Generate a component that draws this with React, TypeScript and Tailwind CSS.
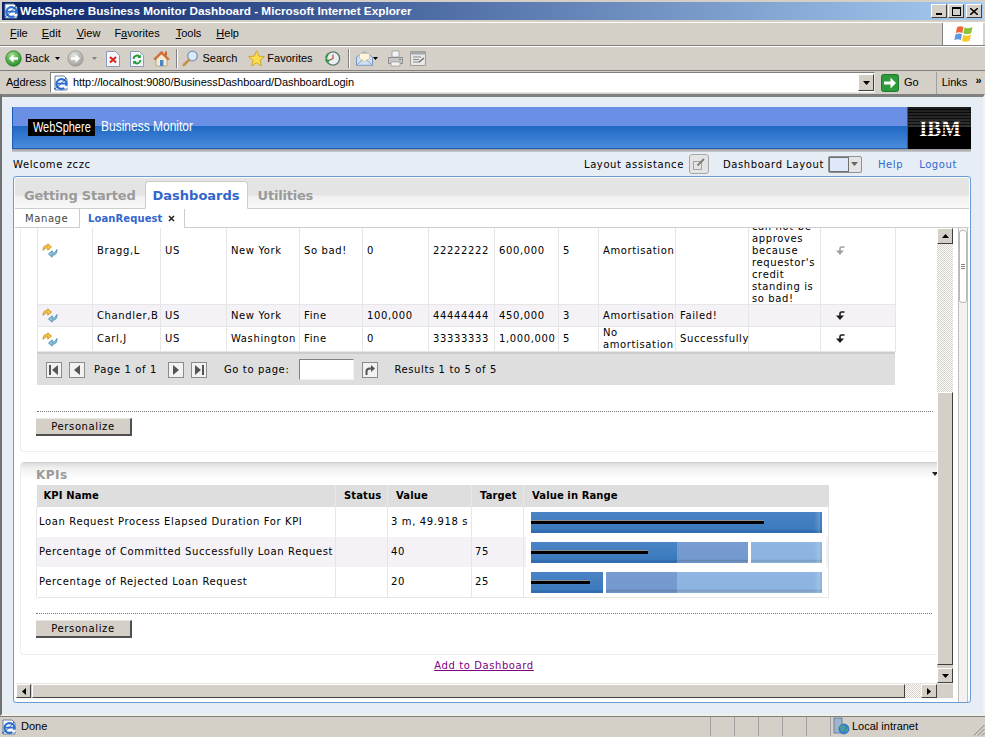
import React from "react";

const IeE = ({ s = 16 }: { s?: number }) => (
  <svg width={s} height={s} viewBox="0 0 16 16">
    <path d="M2 1h9l3 3v11H2z" fill="#fff" stroke="#6b7f9e" />
    <ellipse cx="8.5" cy="9" rx="5" ry="4.8" fill="none" stroke="#2a6fd0" strokeWidth="2.2" />
    <path d="M4 8.6h9.5" stroke="#2a6fd0" strokeWidth="1.8" />
    <path d="M11 12.5l3.5-1" stroke="#fff" strokeWidth="2" />
    <path d="M1 14c2 0 9-7 12-11" fill="none" stroke="#1b4fa8" strokeWidth="1" />
  </svg>
);

const NavCircle = ({ on, flip }: { on: boolean; flip?: boolean }) => (
  <svg width="17" height="17" viewBox="0 0 17 17">
    <defs>
      <radialGradient id="gOn" cx="40%" cy="30%" r="75%">
        <stop offset="0" stopColor="#a4e08c" />
        <stop offset="1" stopColor="#1e8a24" />
      </radialGradient>
      <radialGradient id="gOff" cx="40%" cy="30%" r="75%">
        <stop offset="0" stopColor="#e4e4e0" />
        <stop offset="1" stopColor="#9a9a96" />
      </radialGradient>
    </defs>
    <circle cx="8.5" cy="8.5" r="7.7" fill={on ? "url(#gOn)" : "url(#gOff)"} stroke={on ? "#2f7a2c" : "#979793"} strokeWidth="0.8" />
    <path d={flip ? "M4 7.3h4.5V4.2l4.5 4.3-4.5 4.3V9.7H4z" : "M13 7.3H8.5V4.2L4 8.5l4.5 4.3V9.7H13z"} fill="#fff" />
  </svg>
);

const SmallDown = ({ c = "#000" }: { c?: string }) => (
  <svg width="5" height="3" viewBox="0 0 5 3"><path d="M0 0h5L2.5 3z" fill={c} /></svg>
);

const Stop = () => (
  <svg width="14" height="16" viewBox="0 0 14 16">
    <path d="M.5.5h9l4 4v11H.5z" fill="#f4f6fb" stroke="#8a9ab8" />
    <path d="M4 6l6 5.5M10 6l-6 5.5" stroke="#d8261c" strokeWidth="2" />
  </svg>
);
const Refresh = () => (
  <svg width="14" height="16" viewBox="0 0 14 16">
    <path d="M.5.5h9l4 4v11H.5z" fill="#f4f6fb" stroke="#8a9ab8" />
    <path d="M3.5 8a3.5 3.5 0 0 1 6-2.4" fill="none" stroke="#1e9a30" strokeWidth="1.8" />
    <path d="M10.8 3.5v3.4H7.4z" fill="#1e9a30" />
    <path d="M10.5 9a3.5 3.5 0 0 1-6 2.4" fill="none" stroke="#1e9a30" strokeWidth="1.8" />
    <path d="M3.2 13.5v-3.4h3.4z" fill="#1e9a30" />
  </svg>
);
const Home = () => (
  <svg width="17" height="17" viewBox="0 0 17 17">
    <path d="M3 8v8h11V8L8.5 3z" fill="#f3ead8" stroke="#a88e68" strokeWidth=".7" />
    <path d="M.7 9L8.5 1.2 16.3 9l-1.4 1L8.5 4 2.2 10z" fill="#e2702a" stroke="#b04c16" strokeWidth=".5" />
    <rect x="7" y="10" width="3.4" height="6" fill="#4d86c8" />
    <rect x="12" y="1.5" width="2" height="4" fill="#c8622a" />
  </svg>
);
const Search = () => (
  <svg width="17" height="17" viewBox="0 0 17 17">
    <circle cx="10.5" cy="6" r="4.8" fill="#d8ecfa" stroke="#7c94b4" strokeWidth="1.3" />
    <path d="M7 9.8L1.8 15" stroke="#c6904a" strokeWidth="2.6" strokeLinecap="round" />
  </svg>
);
const Star = () => (
  <svg width="17" height="17" viewBox="0 0 17 17">
    <path d="M8.5.8l2.3 5.3 5.6.5-4.3 3.7 1.3 5.6-4.9-3-4.9 3 1.3-5.6L.6 6.6l5.6-.5z" fill="#fbdc4a" stroke="#c89a1e" strokeWidth=".8" />
  </svg>
);
const History = () => (
  <svg width="17" height="17" viewBox="0 0 17 17">
    <circle cx="9" cy="8.5" r="6.6" fill="#e8eef2" stroke="#5e7c6c" strokeWidth="1.4" />
    <path d="M9 4.5v4l-3 1.5" fill="none" stroke="#c0392b" strokeWidth="1.1" />
    <path d="M.5 9.5h6l-3 4z" fill="#2a9a3a" />
    <path d="M2 8a7 7 0 0 1 2-4" fill="none" stroke="#2a9a3a" strokeWidth="2" />
  </svg>
);
const Mail = () => (
  <svg width="17" height="15" viewBox="0 0 17 15">
    <path d="M.5 6L8.5.7 16.5 6v8.3H.5z" fill="#cfe0f4" stroke="#7f97c0" />
    <path d="M3.5 2.5h10v5l-5 3-5-3z" fill="#fff5d8" stroke="#d0b878" strokeWidth=".6" />
    <path d="M.7 14l5.8-5M16.3 14l-5.8-5" stroke="#7f97c0" strokeWidth=".8" />
  </svg>
);
const Printer = () => (
  <svg width="17" height="17" viewBox="0 0 17 17">
    <path d="M5 1h7v6H5z" fill="#f4f4f4" stroke="#9a9a9a" strokeWidth=".8" />
    <path d="M1.5 7.5h14v6h-14z" fill="#c6c6c6" stroke="#8c8c8c" />
    <path d="M4 12h9v4H4z" fill="#f6f6f6" stroke="#9a9a9a" strokeWidth=".8" />
    <circle cx="13" cy="9.5" r=".8" fill="#666" />
  </svg>
);
const EditIcon = () => (
  <svg width="16" height="15" viewBox="0 0 16 15">
    <path d="M.5.5h15v14H.5z" fill="#e8e8e8" stroke="#9c9c9c" />
    <path d="M.5.5h15v3H.5z" fill="#a6a6a6" />
    <path d="M3 6h8M3 8.5h6M3 11h7" stroke="#8a8a8a" />
    <path d="M9 11l5-4" stroke="#6a6a6a" strokeWidth="1.4" />
  </svg>
);
const Flag = () => (
  <svg width="21" height="19" viewBox="0 0 21 19">
    <path d="M4 2.5C6 1 8 1 10.5 2L9.3 8C7 7 5 7 2.8 8.3z" fill="#f0663a" />
    <path d="M11.5 2.5c2.5 1 4.500 1 8 -.5L18.300 8c-3 1.500-5 1.500-8 .5z" fill="#8ac63a" />
    <path d="M2.500 9.500C5 8.300 7 8.300 9 9.200L7.800 15C5.500 14 3.500 14 1.300 15.300z" fill="#5a9ae0" />
    <path d="M10.200 10c2.500 1 4.800 1 7.800-.500L16.800 15.500c-3 1.500-5.300 1.500-7.800.500z" fill="#f8c828" />
  </svg>
);
const GoIcon = () => (
  <svg width="18" height="18" viewBox="0 0 18 18">
    <rect x=".5" y=".5" width="17" height="17" rx="2" fill="#2c9a3c" stroke="#1c7a2c" />
    <path d="M3 7.500h6.500V3.500L15 9l-5.500 5.500v-4H3z" fill="#fff" />
  </svg>
);
const NetIcon = () => (
  <svg width="17" height="19" viewBox="0 0 17 19">
    <rect x="1" y="1" width="8" height="15" fill="#9cb4cc" stroke="#51688c" strokeWidth=".7" />
    <circle cx="11" cy="12" r="5" fill="#3a82d8" stroke="#2460a8" strokeWidth=".6" />
    <path d="M8 10c2-2 4 0 3 2s-3 2-3-2zM13 14l2-2" stroke="#4cb84c" strokeWidth="1.400" fill="none" />
  </svg>
);
const Grip = () => (
  <svg width="12" height="12" viewBox="0 0 12 12">
    <path d="M11.500 1L1 11.500M11.500 5L5 11.500M11.500 9L9 11.500" stroke="#808080" />
  </svg>
);

const RowIcon = () => (
  <svg width="16" height="15" viewBox="0 0 16 15" className="block">
    <path d="M1 7.500C1 3 3.500 2 5.800 2.400V.8L9.500 4 5.800 7.200V5C4 4.800 2.500 5.500 1 7.500z" fill="#f6c448" stroke="#c88a1c" strokeWidth=".8" />
    <path d="M15 6.500c0 5-2.500 6-4.800 5.500v2.200L6.500 11l3.700-3.200V10c1.800.2 3.300-1 4.800-3.500z" fill="#8cc4dc" stroke="#3c84a8" strokeWidth=".8" />
  </svg>
);
const Undo = ({ c = "#1a1a1a" }: { c?: string }) => (
  <svg width="11" height="10" viewBox="0 0 11 10" className="block">
    <path d="M9.500 1H6.500Q5 1 5 2.500V5" fill="none" stroke={c} strokeWidth="1.600" />
    <path d="M1 4.500h8L5 9z" fill={c} />
  </svg>
);

const btn = "border border-t-white border-l-white border-r-[#404040] border-b-[#404040] bg-[#d4d0c8]";

const Tri = ({ d }: { d: "u" | "d" | "l" | "r" }) => {
  const p = { u: "M0 4L3.500 0 7 4z", d: "M0 0h7L3.500 4z", l: "M4 0v7L0 3.500z", r: "M0 0v7L4 3.500z" }[d];
  const vertical = d === "u" || d === "d";
  return (
    <svg width={vertical ? 7 : 4} height={vertical ? 4 : 7} viewBox={vertical ? "0 0 7 4" : "0 0 4 7"}>
      <path d={p} fill="#000" />
    </svg>
  );
};

const Personalize = () => (
  <button className="block w-[96px] h-[18px] bg-[#d4d0c8] border-t border-t-[#e8e6e0] border-r-2 border-r-[#505050] border-b-2 border-b-[#505050] text-[10px] tracking-[0.6px] text-black leading-none">
    Personalize
  </button>
);

const PagerBtn = ({ kind }: { kind: "first" | "prev" | "next" | "last" | "go" }) => (
  <div className="w-[16px] h-[16px] border border-[#8c8c8c] bg-[#f2f2f2] flex items-center justify-center">
    <svg width="12" height="12" viewBox="0 0 12 12">
      {kind === "first" && <path d="M1 1h2v10H1zM10 1v10L4 6z" fill="#555" />}
      {kind === "prev" && <path d="M9 1v10L3 6z" fill="#555" />}
      {kind === "next" && <path d="M3 1v10l6-5z" fill="#555" />}
      {kind === "last" && <path d="M9 1h2v10H9zM2 1v10l6-5z" fill="#555" />}
      {kind === "go" && (
        <>
          <path d="M2.500 11V7.500Q2.500 4.500 6 4.500H7" fill="none" stroke="#555" strokeWidth="2" />
          <path d="M7 1l4 3.500L7 8z" fill="#555" />
        </>
      )}
    </svg>
  </div>
);

const td = "border border-[#e6e6e6] px-[4px] align-middle";

const rows = [
  { cls: "h-[108px]", bg: "bg-white", c: ["Bragg,L", "US", "New York", "So bad!", "0", "22222222", "600,000", "5", "Amortisation", ""], gray: true },
  { cls: "h-[22px]", bg: "bg-[#f5f2f7]", c: ["Chandler,B", "US", "New York", "Fine", "100,000", "44444444", "450,000", "3", "Amortisation", "Failed!"], gray: false },
  { cls: "h-[25px]", bg: "bg-white", c: ["Carl,J", "US", "Washington", "Fine", "0", "33333333", "1,000,000", "5", "No amortisation", "Successfully"], gray: false },
];

const Bar = ({ seg, mark }: { seg: [number, string][]; mark: number }) => (
  <div className="relative flex w-[291px] h-[21px]">
    {seg.map(([w, k], i) => (
      <div
        key={i}
        style={{ width: w }}
        className={
          k === "d"
            ? "h-full bg-[linear-gradient(#4a84c6,#3a7abc_85%,#2f68aa_90%,#3470b2)]"
            : k === "m"
            ? "h-full bg-[linear-gradient(#7a9cd2,#7299cf_82%,#6684b0_88%,#7299cf)]"
            : k === "l"
            ? "h-full bg-[linear-gradient(#8fb6e2,#8cb4e0_82%,#7f9dbe_88%,#8cb4e0)]"
            : "h-full bg-white"
        }
      />
    ))}
    <div className="absolute right-[2px] top-0 bottom-0 w-[6px] bg-[linear-gradient(90deg,rgba(255,255,255,0),rgba(255,255,255,0.18))]" />
    <div style={{ width: mark }} className="absolute left-0 top-[8px] h-[4px] bg-black border-t border-t-[#909090]" />
  </div>
);

const kpis: { n: string; v: string; t: string; seg: [number, string][]; mark: number; bg: string }[] = [
  { n: "Loan Request Process Elapsed Duration For KPI", v: "3 m, 49.918 s", t: "", seg: [[291, "d"]], mark: 233, bg: "bg-white" },
  { n: "Percentage of Committed Successfully Loan Request", v: "40", t: "75", seg: [[146, "d"], [71, "m"], [3, "w"], [71, "l"]], mark: 117, bg: "bg-[#f5f2f7]" },
  { n: "Percentage of Rejected Loan Request", v: "20", t: "25", seg: [[72, "d"], [3, "w"], [71, "m"], [145, "l"]], mark: 59, bg: "bg-white" },
];

export default function App() {
  return (
    <div className="w-[985px] h-[737px] flex flex-col bg-[#d4d0c8] overflow-hidden font-['Liberation_Sans',sans-serif] text-black">
      {/* Title bar */}
      <div className="h-[22px] pt-[2px] px-[2px] pb-[2px] shrink-0">
        <div className="h-[18px] flex items-center bg-[linear-gradient(90deg,#0a246a,#a6caf0)] pl-[1px] pr-[1px]">
          <IeE />
          <span className="ml-[1px] text-white font-bold text-[11.75px] whitespace-nowrap">WebSphere Business Monitor Dashboard - Microsoft Internet Explorer</span>
          <div className={`ml-auto w-[16px] h-[14px] ${btn} flex items-end justify-center pb-[2px]`}><div className="w-[6px] h-[2px] bg-black" /></div>
          <div className={`ml-[1px] w-[16px] h-[14px] ${btn} flex items-center justify-center`}><div className="w-[9px] h-[9px] border border-black border-t-2" /></div>
          <div className={`ml-[2px] w-[16px] h-[14px] ${btn} flex items-center justify-center`}>
            <svg width="8" height="7" viewBox="0 0 8 7"><path d="M0 0l8 7M8 0L0 7" stroke="#000" strokeWidth="1.500" /></svg>
          </div>
        </div>
      </div>
      {/* Menu */}
      <div className="h-[24px] shrink-0 flex items-stretch border-t border-t-white border-b border-b-[#808080]">
        <div className="flex items-center text-[11px] flex-1 pb-[2px]">
          <span className="ml-[10px]"><u>F</u>ile</span>
          <span className="ml-[14px]"><u>E</u>dit</span>
          <span className="ml-[16px]"><u>V</u>iew</span>
          <span className="ml-[14px]">F<u>a</u>vorites</span>
          <span className="ml-[16px]"><u>T</u>ools</span>
          <span className="ml-[15px]"><u>H</u>elp</span>
        </div>
        <div className="w-[41px] mr-[2px] bg-white border-l border-l-[#808080] flex items-center justify-center"><Flag /></div>
      </div>
      {/* Toolbar */}
      <div className="h-[24px] shrink-0 flex items-center border-t border-t-white text-[11px]">
        <div className="ml-[5px]"><NavCircle on /></div>
        <span className="ml-[3px]">Back</span>
        <div className="ml-[6px]"><SmallDown /></div>
        <div className="ml-[7px]"><NavCircle on={false} flip /></div>
        <div className="ml-[8px]"><SmallDown c="#808080" /></div>
        <div className="ml-[9px]"><Stop /></div>
        <div className="ml-[10px]"><Refresh /></div>
        <div className="ml-[9px]"><Home /></div>
        <div className="ml-[6px] w-[2px] h-[19px] border-l border-l-[#808080] border-r border-r-white" />
        <div className="ml-[4px]"><Search /></div>
        <span className="ml-[3px]">Search</span>
        <div className="ml-[11px]"><Star /></div>
        <span className="ml-[2px]">Favorites</span>
        <div className="ml-[11px]"><History /></div>
        <div className="ml-[7px] w-[2px] h-[19px] border-l border-l-[#808080] border-r border-r-white" />
        <div className="ml-[6px]"><Mail /></div>
        <div><SmallDown /></div>
        <div className="ml-[9px]"><Printer /></div>
        <div className="ml-[6px]"><EditIcon /></div>
      </div>
      {/* Address */}
      <div className="h-[24px] shrink-0 flex items-center border-t border-t-[#808080] text-[11px]">
        <span className="ml-[6px] w-[44px]">A<u>d</u>dress</span>
        <div className="w-[825px] h-[21px] flex items-center bg-white border border-[#808080] border-b-[#e8e6e0] border-r-[#e8e6e0] pl-[2px]">
          <IeE />
          <span className="ml-[4px] text-[11px] tracking-[-0.05px]">http://localhost:9080/BusinessDashboard/DashboardLogin</span>
          <div className={`ml-auto w-[16px] h-[17px] ${btn} flex items-center justify-center`}><Tri d="d" /></div>
        </div>
        <div className="ml-[6px]"><GoIcon /></div>
        <span className="ml-[5px]">Go</span>
        <div className="ml-[17px] h-[22px] border-l border-l-[#a0a0a0]" />
        <span className="ml-[5px]">Links</span>
        <span className="ml-[8px] text-[11px] font-bold leading-none pb-[4px]">»</span>
      </div>
      {/* Page */}
      <div className="h-[622px] shrink-0 bg-[#e6edf5] border-t-[3px] border-t-[#808080] border-l-2 border-l-[#707070] border-r-2 border-r-[#f4f3f0] border-b-2 border-b-[#f0efe9] pl-[10px] pr-[12px] pt-[10px] font-['DejaVu_Sans',sans-serif]">
        {/* Banner */}
        <div className="h-[42px] flex bg-[linear-gradient(#6a90e6_0,#6a90e6_47%,#2068c4_47%,#4a8cdc_100%)] border-l border-l-[#1a5cb4] border-b border-b-[#1a5cb4] w-[959px]">
          <div className="flex items-center ml-[15px] font-['Liberation_Sans',sans-serif]">
            <span className="w-[67px] h-[17px] bg-black text-white flex items-center justify-center overflow-hidden">
              <span className="block scale-x-[0.785] text-[14px] leading-[17px] whitespace-nowrap">WebSphere</span>
            </span>
            <span className="block ml-[6px] w-[100px] text-white text-[15px] whitespace-nowrap scale-x-[0.8] origin-left mb-[2px]">Business Monitor</span>
          </div>
          <div className="ml-auto relative w-[64px] h-[42px] bg-[linear-gradient(#1c1c1c,#333_48%,#000_48%)] flex items-center justify-center border-l border-l-[#1a5cb4]">
            <span className="font-['Liberation_Serif',serif] font-bold text-white text-[23px] leading-none scale-x-[0.9]">IBM</span>
            <div className="absolute inset-0 bg-[repeating-linear-gradient(transparent_0,transparent_2px,rgba(0,0,0,0.7)_2px,rgba(0,0,0,0.7)_3px)]" />
          </div>
        </div>
        <div className="h-[3px] w-[959px] bg-[linear-gradient(#9a9a9a,#c8ccd2)]" />
        {/* Welcome row */}
        <div className="h-[24px] w-[944px] flex items-center text-[10px] tracking-[0.6px] ml-[1px]">
          <span>Welcome zczc</span>
          <span className="ml-auto">Layout assistance</span>
          <div className="ml-[5px] w-[20px] h-[20px] border border-[#a8a8a8] rounded-[3px] bg-[#e4e4e4] flex items-center justify-center">
            <svg width="14" height="14" viewBox="0 0 14 14"><path d="M1.500 4.500h8v8h-8z" fill="none" stroke="#a0a0a0" /><path d="M5.500 8.500L12 2" stroke="#808080" strokeWidth="2" /></svg>
          </div>
          <span className="ml-[14px]">Dashboard Layout</span>
          <div className="ml-[4px] w-[34px] h-[17px] border border-[#909090] rounded-[2px] flex bg-[#e4e4e4]">
            <div className="w-[20px] bg-[#dfe8fb] border border-[#707070]" />
            <div className="flex-1 flex items-center justify-center"><svg width="7" height="4" viewBox="0 0 7 4"><path d="M0 0h7L3.500 4z" fill="#666" /></svg></div>
          </div>
          <span className="ml-[16px] text-[#3366cc]">Help</span>
          <span className="ml-[16px] text-[#3366cc]">Logout</span>
        </div>
        {/* Main panel */}
        <div className="h-[527px] w-[958px] ml-[1px] bg-white border border-[#6a9ad4] rounded-[3px] flex flex-col overflow-hidden pt-[1px]">
          {/* Tabs */}
          <div className="h-[31px] shrink-0 ml-[1px] mr-[1px] flex items-end bg-[linear-gradient(#e4e4e4_0,#e4e4e4_55%,#f0f0f0_62%,#f8f8f8_100%)] border-b border-b-[#cccccc] pl-[9px]">
            <span className="mb-[3px] text-[13px] font-bold text-[#9a9a9a] tracking-[-0.2px]">Getting Started</span>
            <div className="ml-[9px] w-[103px] h-[28px] -mb-px bg-white border border-[#cccccc] border-b-white rounded-t-[4px] flex items-center justify-center pt-[2px] text-[13px] font-bold text-[#3366cc]">Dashboards</div>
            <span className="ml-[10px] mb-[3px] text-[13px] font-bold text-[#9a9a9a] tracking-[-0.2px]">Utilities</span>
          </div>
          {/* Sub tabs */}
          <div className="h-[19px] shrink-0 ml-[1px] mr-[1px] flex items-stretch border-b border-b-[#cccccc] text-[10px] tracking-[0.6px]">
            <div className="w-[64px] pl-[10px] flex items-center text-[#444]">Manage</div>
            <div className="w-[106px] -mb-px bg-white border-l border-r border-[#cccccc] flex items-center pl-[8px] font-bold text-[#3366cc] tracking-[0.1px]">
              LoanRequest
              <svg width="7" height="7" viewBox="0 0 7 7" className="ml-[6px]"><path d="M1 1l5 5M6 1L1 6" stroke="#222" strokeWidth="1.500" /></svg>
            </div>
          </div>
          {/* Frame */}
          <div className="flex-1 flex pl-[2px] pb-[3px] min-h-0">
            <div className="w-[937px] flex flex-col">
              <div className="h-[455px] flex">
                {/* Viewport */}
                <div className="w-[921px] h-[455px] overflow-hidden text-[10px] tracking-[0.62px] leading-[12px]">
                  {/* Section 1 */}
                  <div className="ml-[4px] w-[940px] h-[224px] border-l border-b border-[#eeeeee] rounded-bl-[4px] pl-[16px] overflow-hidden">
                    <table className="table-fixed border-collapse w-[858px] -mt-[32px]">
                      <colgroup>
                        <col className="w-[55px]" /><col className="w-[68px]" /><col className="w-[66px]" /><col className="w-[73px]" /><col className="w-[63px]" /><col className="w-[66px]" /><col className="w-[66px]" /><col className="w-[64px]" /><col className="w-[40px]" /><col className="w-[77px]" /><col className="w-[73px]" /><col className="w-[72px]" /><col className="w-[75px]" />
                      </colgroup>
                      <tbody>
                        {rows.map((r, i) => (
                          <tr key={i} className={`${r.cls} ${r.bg}`}>
                            <td className={td}><RowIcon /></td>
                            {r.c.map((t, j) => (
                              <td key={j} className={`${td} whitespace-normal`}>{t}</td>
                            ))}
                            {i === 0 ? (
                              <td className="border border-[#e6e6e6] px-[3px] align-bottom">
                                <div className="-mb-[1px]">can not be approves because requestor's credit standing is so bad!</div>
                              </td>
                            ) : (
                              <td className={td} />
                            )}
                            <td className={td}>
                              <div className="ml-[10px]"><Undo c={r.gray ? "#a0a0a0" : "#1a1a1a"} /></div>
                            </td>
                          </tr>
                        ))}
                      </tbody>
                    </table>
                    <div className="w-[858px] h-[33px] bg-[#dedede] border-t-2 border-t-[#cccccc] flex items-center pl-[9px]">
                      <PagerBtn kind="first" />
                      <div className="ml-[7px]"><PagerBtn kind="prev" /></div>
                      <span className="ml-[9px]">Page 1 of 1</span>
                      <div className="ml-[11px]"><PagerBtn kind="next" /></div>
                      <div className="ml-[7px]"><PagerBtn kind="last" /></div>
                      <span className="ml-[17px]">Go to page:</span>
                      <div className="ml-[10px] w-[55px] h-[21px] bg-white border border-[#808080] border-r-[#f0f0f0] border-b-[#f0f0f0]" />
                      <div className="ml-[8px]"><PagerBtn kind="go" /></div>
                      <span className="ml-[16px]">Results 1 to 5 of 5</span>
                    </div>
                    <div className="w-[896px] mt-[26px] border-t border-dotted border-t-[#777777]" />
                    <div className="mt-[6px] -ml-[1px]"><Personalize /></div>
                  </div>
                  {/* Section 2 */}
                  <div className="mt-[10px] ml-[4px] w-[940px] h-[193px] border-l border-b border-[#eeeeee] rounded-[4px] pl-[15px] relative">
                    <div className="absolute left-0 right-0 top-0 h-[18px] bg-[linear-gradient(#dcdcdc,#f0f0f0_30%,#ffffff)] border-t border-t-[#d0d0d0] rounded-t-[4px]" />
                    <div className="absolute left-[911px] top-[10px]"><svg width="6" height="4" viewBox="0 0 6 4"><path d="M0 0h6L3 4z" fill="#222" /></svg></div>
                    <div className="relative h-[23px] text-[12px] font-bold text-[#9a9a9a] tracking-[0.5px] pt-[6px] leading-[14px]">KPIs</div>
                    <table className="table-fixed border-collapse w-[792px]">
                      <colgroup>
                        <col className="w-[299px]" /><col className="w-[52px]" /><col className="w-[84px]" /><col className="w-[52px]" /><col className="w-[305px]" />
                      </colgroup>
                      <thead>
                        <tr className="h-[22px] bg-[#dedede] font-bold text-left">
                          <th className="border-r border-r-[#e8e8e8] pl-[7px] font-bold tracking-[0.1px] whitespace-nowrap">KPI Name</th>
                          {["Status", "Value", "Target", "Value in Range"].map((h) => (
                            <th key={h} className="border-r border-r-[#e8e8e8] pl-[8px] pr-0 font-bold tracking-[0.1px] last:border-r-0 whitespace-nowrap">{h}</th>
                          ))}
                        </tr>
                      </thead>
                      <tbody>
                        {kpis.map((k) => (
                          <tr key={k.n} className={`h-[30px] ${k.bg}`}>
                            <td className="border-l border-r border-[#e6e6e6] pl-[2px] pr-0 whitespace-nowrap">{k.n}</td>
                            <td className="border-r border-[#e6e6e6]" />
                            <td className="border-r border-[#e6e6e6] pl-[3px] whitespace-nowrap">{k.v}</td>
                            <td className="border-r border-[#e6e6e6] pl-[3px]">{k.t}</td>
                            <td className="border-r border-[#e6e6e6] px-[2px]">
                              <div className="h-[30px] bg-white flex items-center pl-[5px]">
                                <Bar seg={k.seg} mark={k.mark} />
                              </div>
                            </td>
                          </tr>
                        ))}
                        <tr className="h-0"><td colSpan={5} className="border-b border-[#e6e6e6]" /></tr>
                      </tbody>
                    </table>
                    <div className="w-[896px] mt-[15px] border-t border-dotted border-t-[#777777]" />
                    <div className="mt-[6px]"><Personalize /></div>
                  </div>
                  <div className="mt-[5px] w-[936px] text-center text-[10px] tracking-[0.6px] text-[#800080] underline">Add to Dashboard</div>
                </div>
                {/* Vertical scrollbar */}
                <div className="w-[16px] h-[455px] flex flex-col bg-[#d4d0c8]">
                  <div className={`h-[16px] shrink-0 ${btn} flex items-center justify-center`}><Tri d="u" /></div>
                  <div className="h-[148px] shrink-0 bg-[repeating-conic-gradient(#d4d0c8_0_25%,#ffffff_0_50%)] bg-[length:2px_2px]" />
                  <div className={`h-[273px] shrink-0 ${btn}`} />
                  <div className="h-[3px] shrink-0" />
                  <div className={`h-[15px] shrink-0 ${btn} flex items-center justify-center`}><Tri d="d" /></div>
                </div>
              </div>
              {/* Horizontal scrollbar */}
              <div className="h-[15px] flex bg-[#d4d0c8] border-t border-t-[#e8e6e0]">
                <div className={`w-[15px] ${btn} flex items-center justify-center`}><Tri d="l" /></div>
                <div className={`w-[873px] ml-[1px] ${btn}`} />
                <div className="w-[16px] bg-[repeating-conic-gradient(#d4d0c8_0_25%,#ffffff_0_50%)] bg-[length:2px_2px]" />
                <div className={`w-[16px] ${btn} flex items-center justify-center`}><Tri d="r" /></div>
              </div>
            </div>
            {/* Outer thin scrollbar */}
            <div className="ml-[5px] w-[10px] bg-[#f2f2f2] border-l border-r border-[#bfbfbf] pt-[2px] -mb-[3px]">
              <div className="h-[73px] bg-white border border-[#b8b8b8] rounded-[3px] flex flex-col items-center justify-center gap-[1px]">
                <div className="w-[4px] h-px bg-[#888]" /><div className="w-[4px] h-px bg-[#888]" /><div className="w-[4px] h-px bg-[#888]" />
              </div>
            </div>
          </div>
        </div>
      </div>
      {/* Status */}
      <div className="h-[21px] flex items-center text-[11px] border-t border-t-[#808080] pb-[1px]">
        <div className="ml-[1px]"><IeE s={16} /></div>
        <span className="ml-[4px] w-[689px]">Done</span>
        <div className="w-[24px] h-[19px] border-l border-l-[#a0a0a0]" />
        <div className="w-[24px] h-[19px] border-l border-l-[#a0a0a0]" />
        <div className="w-[24px] h-[19px] border-l border-l-[#a0a0a0]" />
        <div className="w-[24px] h-[19px] border-l border-l-[#a0a0a0]" />
        <div className="w-[24px] h-[19px] border-l border-l-[#a0a0a0]" />
        <div className="h-[19px] border-l border-l-[#a0a0a0] pl-[2px] flex items-center"><NetIcon /><span className="ml-[2px]">Local intranet</span></div>
        <div className="ml-auto self-end"><Grip /></div>
      </div>
    </div>
  );
}
